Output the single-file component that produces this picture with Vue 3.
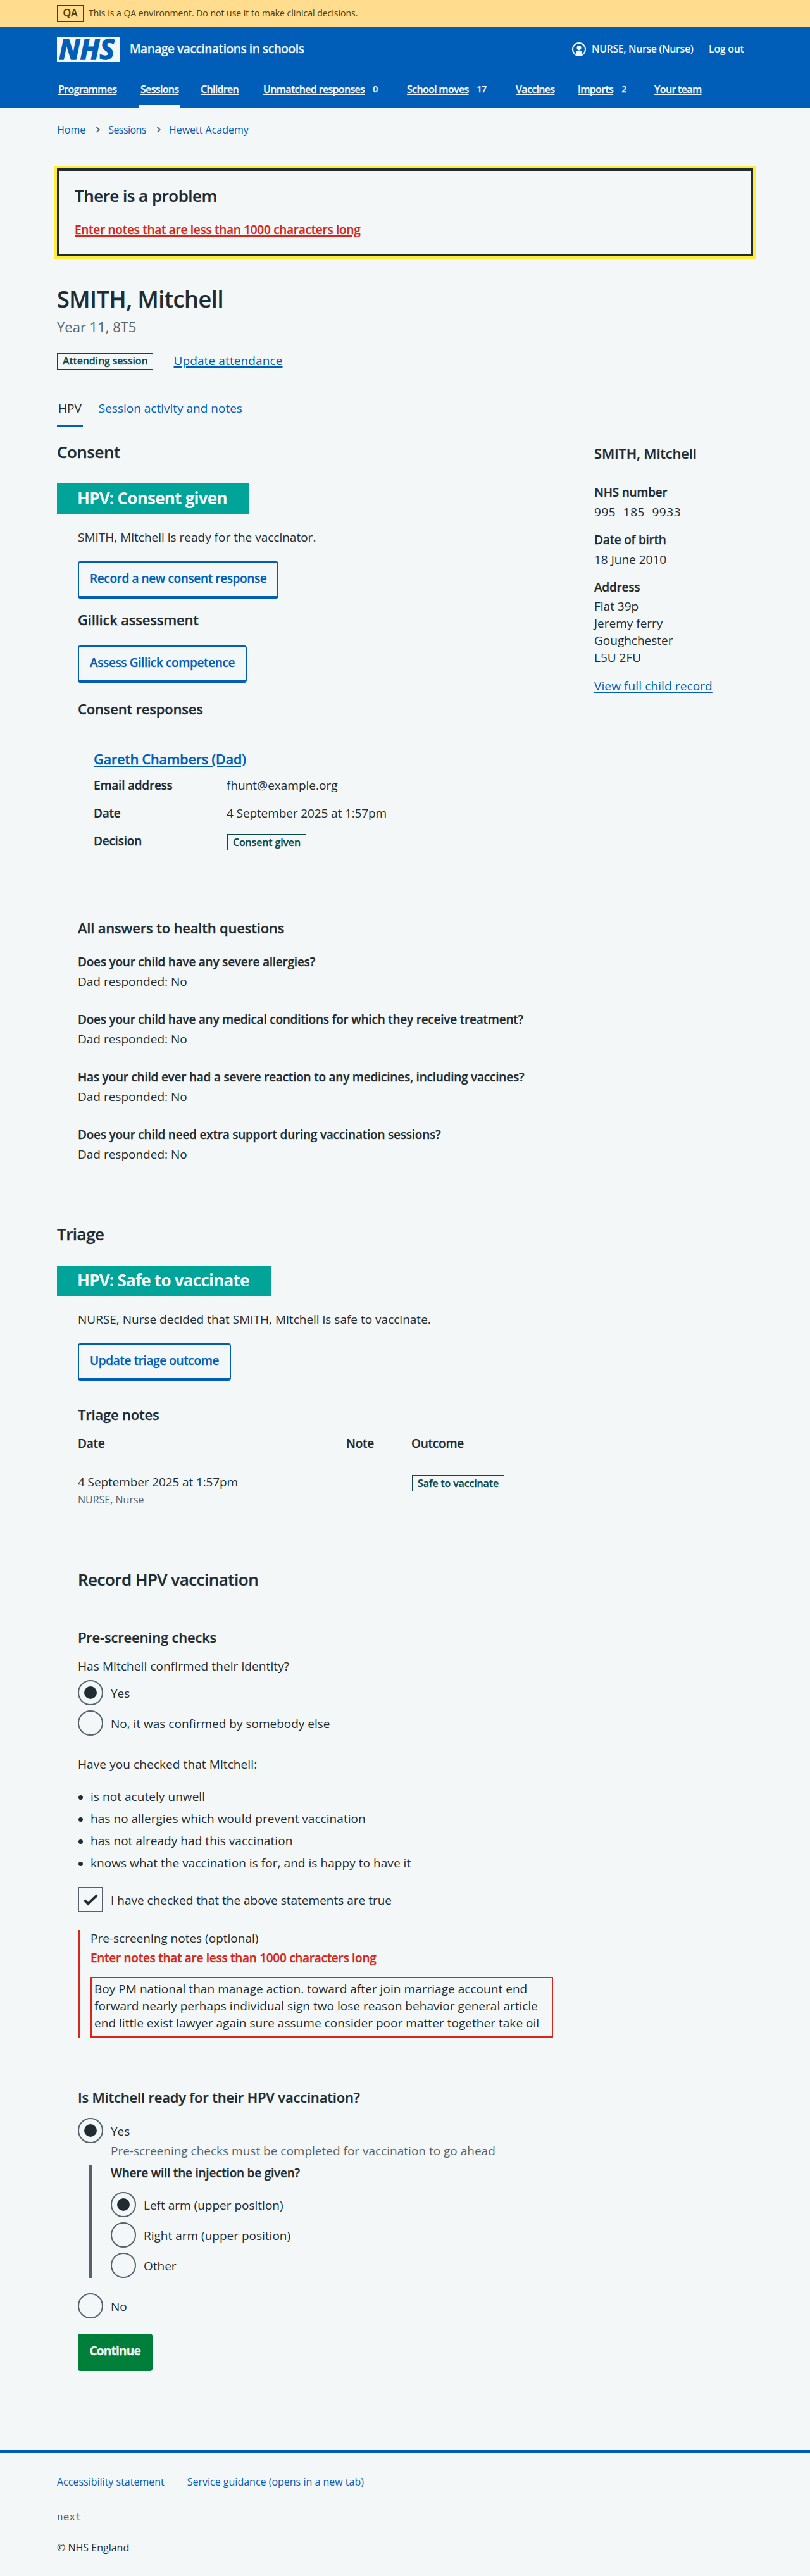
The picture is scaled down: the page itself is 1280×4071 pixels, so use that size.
<script setup>
const nav = [
  { label: 'Programmes' },
  { label: 'Sessions', active: true },
  { label: 'Children' },
  { label: 'Unmatched responses', count: 0 },
  { label: 'School moves', count: 17 },
  { label: 'Vaccines' },
  { label: 'Imports', count: 2 },
  { label: 'Your team' },
]

const questions = [
  'Does your child have any severe allergies?',
  'Does your child have any medical conditions for which they receive treatment?',
  'Has your child ever had a severe reaction to any medicines, including vaccines?',
  'Does your child need extra support during vaccination sessions?',
]

const checks = [
  'is not acutely unwell',
  'has no allergies which would prevent vaccination',
  'has not already had this vaccination',
  'knows what the vaccination is for, and is happy to have it',
]

const sites = ['Left arm (upper position)', 'Right arm (upper position)', 'Other']

const notes = [
  'Boy PM national than manage action. toward after join marriage account end',
  'forward nearly perhaps individual sign two lose reason behavior general article',
  'end little exist lawyer again sure assume consider poor matter together take oil',
  'money house way summer man blue even will behave we scene home room hot him all',
].join('\n')
</script>

<template>
  <div class="page">
    <div class="env">
      <div class="wrap env-row">
        <strong class="env-tag">QA</strong>
        <span class="env-text">This is a QA environment. Do not use it to make clinical decisions.</span>
      </div>
    </div>

    <header class="header">
      <div class="wrap">
        <div class="header-top">
          <span class="logo"><span class="logo-text">NHS</span></span>
          <span class="service">Manage vaccinations in schools</span>
          <svg class="user-icon" width="22" height="22" viewBox="0 0 22 22">
            <circle cx="11" cy="11" r="10" fill="none" stroke="#f3f7f8" stroke-width="2" />
            <circle cx="11" cy="8.4" r="3.5" fill="#f3f7f8" />
            <path d="M6.2 19.6V17a4.8 4.6 0 0 1 9.6 0v2.6A10 10 0 0 1 11 21a10 10 0 0 1-4.8-1.4z" fill="#f3f7f8" />
          </svg>
          <span class="user">NURSE, Nurse (Nurse)</span>
          <a class="logout">Log out</a>
        </div>
        <nav class="nav">
          <div v-for="item in nav" :key="item.label" class="nav-cell">
            <span class="nav-item" :class="{ active: item.active }">
              <a>{{ item.label }}</a><span v-if="item.count !== undefined" class="count">{{ item.count }}</span>
            </span>
          </div>
        </nav>
      </div>
    </header>

    <div class="wrap">
      <div class="crumbs">
        <a>Home</a>
        <svg class="chev" width="8" height="10" viewBox="0 0 8 10"><path d="M1.5 .8 5.8 5 1.5 9.2" fill="none" stroke="#56636c" stroke-width="1.8" /></svg>
        <a class="crumb-mid">Sessions</a>
        <svg class="chev" width="8" height="10" viewBox="0 0 8 10"><path d="M1.5 .8 5.8 5 1.5 9.2" fill="none" stroke="#56636c" stroke-width="1.8" /></svg>
        <a>Hewett Academy</a>
      </div>

      <div class="errors">
        <h2 class="h26">There is a problem</h2>
        <a class="b19 error-link">Enter notes that are less than 1000 characters long</a>
      </div>

      <h1 class="h1">SMITH, Mitchell</h1>
      <div class="caption">Year 11, 8T5</div>
      <div class="attendance">
        <span class="tag">Attending session</span>
        <a class="link">Update attendance</a>
      </div>
      <div class="tabs">
        <span class="tab current">HPV</span>
        <span class="tab">Session activity and notes</span>
      </div>

      <div class="columns">
        <main class="main">
          <h2 class="h26 consent">Consent</h2>
          <div class="banner">HPV: Consent given</div>
          <section class="inner">
            <p class="lead">SMITH, Mitchell is ready for the vaccinator.</p>
            <button class="btn">Record a new consent response</button>
            <h3 class="h22 gillick">Gillick assessment</h3>
            <button class="btn">Assess Gillick competence</button>
            <h3 class="h22 responses">Consent responses</h3>
            <div class="respondent">
              <h4 class="h22"><a class="link name">Gareth Chambers (Dad)</a></h4>
              <div class="row"><b class="b19">Email address</b><span>fhunt@example.org</span></div>
              <div class="row"><b class="b19">Date</b><span class="date">4 September 2025 at 1:57pm</span></div>
              <div class="row"><b class="b19">Decision</b><span class="tag">Consent given</span></div>
            </div>
            <h3 class="h22 answers">All answers to health questions</h3>
            <div v-for="q in questions" :key="q" class="question">
              <b class="b19">{{ q }}</b>
              <p>Dad responded: No</p>
            </div>
          </section>

          <h2 class="h26 triage">Triage</h2>
          <div class="banner">HPV: Safe to vaccinate</div>
          <section class="inner">
            <p class="lead">NURSE, Nurse decided that SMITH, Mitchell is safe to vaccinate.</p>
            <button class="btn">Update triage outcome</button>
            <h3 class="h22 triage-notes">Triage notes</h3>
            <div class="table head b19"><span>Date</span><span>Note</span><span>Outcome</span></div>
            <div class="table body">
              <div>
                <p class="date">4 September 2025 at 1:57pm</p>
                <p class="by">NURSE, Nurse</p>
              </div>
              <span></span>
              <span class="tag">Safe to vaccinate</span>
            </div>

            <h2 class="h26 record">Record HPV vaccination</h2>
            <h3 class="h22 prescreen">Pre-screening checks</h3>
            <p class="legend">Has Mitchell confirmed their identity?</p>
            <div class="options">
              <div class="option"><i class="radio on"></i><span>Yes</span></div>
              <div class="option"><i class="radio"></i><span>No, it was confirmed by somebody else</span></div>
            </div>
            <p class="have">Have you checked that Mitchell:</p>
            <ul class="checks">
              <li v-for="c in checks" :key="c">{{ c }}</li>
            </ul>
            <div class="option statement">
              <i class="checkbox">
                <svg width="36" height="36" viewBox="0 0 36 36"><path d="M9 18.6 14.6 24.4 29 10.6" transform="translate(-.5 .3)" fill="none" stroke="#212b32" stroke-width="4" /></svg>
              </i>
              <span>I have checked that the above statements are true</span>
            </div>

            <div class="field">
              <p class="field-label">Pre-screening notes (optional)</p>
              <p class="b19 field-error">Enter notes that are less than 1000 characters long</p>
              <div class="textarea">{{ notes }}</div>
            </div>

            <h3 class="h22 ready">Is Mitchell ready for their HPV vaccination?</h3>
            <div class="option"><i class="radio on"></i><span>Yes</span></div>
            <p class="hint">Pre-screening checks must be completed for vaccination to go ahead</p>
            <div class="conditional">
              <p class="b19 where">Where will the injection be given?</p>
              <div class="options">
                <div v-for="(s, i) in sites" :key="s" class="option"><i class="radio" :class="{ on: i === 0 }"></i><span>{{ s }}</span></div>
              </div>
            </div>
            <div class="option last"><i class="radio"></i><span>No</span></div>
            <button class="btn primary">Continue</button>
          </section>
        </main>

        <aside class="aside">
          <h2 class="h22">SMITH, Mitchell</h2>
          <b class="b19 first">NHS number</b>
          <p class="number">995 185 9933</p>
          <b class="b19">Date of birth</b>
          <p>18 June 2010</p>
          <b class="b19">Address</b>
          <p class="address">Flat 39p<br>Jeremy ferry<br>Goughchester<br>L5U 2FU</p>
          <a class="link">View full child record</a>
        </aside>
      </div>
    </div>

    <footer class="footer">
      <div class="wrap">
        <div class="footer-links">
          <a>Accessibility statement</a>
          <a>Service guidance (opens in a new tab)</a>
        </div>
        <p class="version">next</p>
        <p class="copy">© NHS England</p>
      </div>
    </footer>
  </div>
</template>

<style>
body { margin: 0; background: #f3f7f8; }
</style>

<style scoped>
.page {
  min-height: 4071px;
  background: #f3f7f8;
  color: #212b32;
  font: 400 19px/28px "Open Sans", "Noto Sans", sans-serif;
}
.page * { box-sizing: border-box; white-space: nowrap; }
h1, h2, h3, h4, p, ul { margin: 0; padding: 0; font-weight: inherit; }
a { text-decoration: underline; text-decoration-thickness: 1px; text-underline-offset: 2px; }
.wrap { width: 1100px; margin: 0 auto; }
.b19, .h22, .h26, .h1, .btn, .tag, .nav, .service, .env-tag { -webkit-text-stroke: 0.25px currentColor; }
.b19 { display: block; font-weight: 600; letter-spacing: -0.012em; }
.h22 { font-size: 22px; line-height: 32px; font-weight: 600; letter-spacing: -0.009em; }
.h26 { font-size: 26px; line-height: 32px; font-weight: 600; letter-spacing: -0.02em; }
.link { color: #005eb8; text-decoration-thickness: 1.5px; letter-spacing: 0.006em; }
.link.name { letter-spacing: -0.02em; }

.env { background: #ffdc8e; color: #4d3b09; height: 42px; }
.env-row { display: flex; align-items: center; height: 42px; }
.env-tag { height: 26px; width: 42px; border: 1px solid #4d3b09; text-align: center; font-size: 16px; line-height: 22px; font-weight: 600; }
.env-text { margin-left: 8px; font-size: 14px; line-height: 20px; }

.header { height: 128px; background: #005eb8; color: #f3f7f8; }
.header-top { display: flex; align-items: center; height: 72px; padding-bottom: 1px; border-bottom: 1px solid rgba(255, 255, 255, 0.2); }
.logo { width: 100px; height: 40px; background: #f3f7f8; color: #005eb8; margin-top: 2px; }
.logo-text { display: block; padding-left: 3px; font-size: 44px; line-height: 38px; font-weight: 700; font-style: italic; letter-spacing: 0.3px; -webkit-text-stroke: 1.5px #005eb8; }
.service { margin-left: 15px; font-weight: 600; letter-spacing: -0.022em; }
.user-icon { margin-left: auto; margin-top: 1px; }
.user { margin-left: 9px; width: 160px; font-size: 16px; line-height: 24px; font-weight: 600; letter-spacing: -0.025em; }
.logout { margin-left: 25px; width: 70px; font-size: 16px; line-height: 24px; font-weight: 600; letter-spacing: -0.02em; }
.nav { display: grid; grid-template-columns: 130px 95px 99px 227px 172px 98px 121px auto; height: 56px; font-size: 16px; line-height: 24px; font-weight: 600; letter-spacing: -0.042em; }
.nav-cell { display: flex; }
.nav-item { display: flex; height: 56px; padding: 15px 2px 0; border-bottom: 4px solid transparent; }
.nav-item.active { border-bottom-color: #f3f7f8; }
.count { margin-left: 13px; font-size: 14px; }

.crumbs { display: flex; align-items: center; margin-top: 23px; font-size: 16px; line-height: 24px; color: #005eb8; }
.crumb-mid { letter-spacing: -0.035em; }
.chev { margin: 0 12px 0 16px; }

.errors { height: 139px; margin-top: 49px; padding: 23px 24px 0; border: 4px solid #212b32; outline: 4px solid #ffeb3b; }
.error-link { margin-top: 24px; color: #d5281b; letter-spacing: -0.015em; text-decoration-thickness: 1.5px; }

.h1 { margin-top: 45px; font-size: 36px; line-height: 45px; font-weight: 600; letter-spacing: -0.012em; }
.caption { margin-top: 5px; font-size: 22px; line-height: 32px; color: #56636c; }
.attendance { display: flex; height: 26px; margin-top: 26px; }
.attendance .link { margin: -2px 0 0 32px; }
.tag { display: inline-block; height: 26px; padding: 0 8px; border: 1px solid #0c4a4a; color: #0c4a4a; font-size: 16px; line-height: 24px; font-weight: 600; letter-spacing: -0.01em; }
.attendance .tag { line-height: 22px; }
.tabs { display: flex; gap: 23px; margin-top: 47px; }
.tab { height: 44px; padding: 0 2px; color: #005eb8; }
.tab.current { color: #212b32; border-bottom: 4px solid #005eb8; }

.columns { display: flex; justify-content: space-between; }
.main { width: 800px; }
.consent { margin-top: 23px; }
.banner { display: inline-block; height: 48px; margin-top: 34px; padding: 7px 34px 0 32px; background: #00a499; color: #f3f7f8; font-size: 26px; line-height: 32px; font-weight: 700; letter-spacing: -0.029em; vertical-align: top; }
.inner { padding-left: 33px; }
.lead { padding: 23px 0 24px; }
.btn { display: block; height: 59px; margin: 0; padding: 11px 17px 14px; border: 2px solid #005eb8; border-bottom-width: 4px; border-radius: 4px; background: #f3f7f8; color: #005eb8; font: inherit; font-weight: 600; letter-spacing: -0.02em; }
.btn.primary { margin-top: 24px; padding: 11px 16.5px 14px; background: #007f3b; border-color: #007f3b; color: #f3f7f8; font-weight: 700; letter-spacing: -0.04em; }
.gillick { margin-top: 17px; margin-bottom: 25px; }
.responses { margin-top: 25px; }
.respondent { margin-top: 47px; padding-left: 25px; }
.respondent .row:nth-child(2) { margin-top: 12px; }
.row { display: flex; height: 28px; margin-top: 16px; }
.row .b19 { width: 210px; }
.row .tag { margin: 3px 0 0 1px; }
.date { letter-spacing: -0.006em; }
.answers { margin-top: 107px; margin-bottom: 24px; }
.question { height: 59px; margin-bottom: 32px; }
.question .b19 { margin-bottom: 3px; }
.triage { margin-top: 96px; }
.question:last-child { margin-bottom: 0; }
.triage-notes { margin-top: 37px; }
.table { display: grid; grid-template-columns: 424px 103px auto; justify-items: start; }
.table.head { margin-top: 16px; }
.table.body { margin-top: 33px; }
.table .tag { margin: 3px 0 0 1px; }
.by { margin-top: 2px; font-size: 16px; line-height: 24px; color: #56636c; }
.record { margin-top: 98px; }
.prescreen { margin-top: 59px; }
.legend { margin-top: 16px; margin-bottom: 8px; letter-spacing: 0.005em; }
.options { display: flex; flex-direction: column; gap: 8px; }
.option { display: flex; height: 40px; }
.option span { margin: 7px 0 0 12px; }
.radio { flex: none; width: 40px; height: 40px; border: 2px solid #56636c; border-radius: 50%; display: grid; place-items: center; }
.radio.on::after { content: ""; width: 20px; height: 20px; border-radius: 50%; background: #212b32; }
.checkbox { flex: none; display: block; width: 40px; height: 40px; border: 2px solid #56636c; }
.checkbox svg { display: block; }
.have { margin-top: 31px; letter-spacing: 0.005em; }
.checks { list-style: none; margin-top: 23px; display: flex; flex-direction: column; gap: 7px; letter-spacing: 0.003em; }
.checks li { display: flex; align-items: center; }
.checks li::before { content: ""; width: 7px; height: 7px; margin: 2px 12px 0 1px; border-radius: 50%; background: #212b32; }
.statement { margin-top: 24px; }
.field { height: 170px; margin-top: 28px; padding-left: 16px; border-left: 4px solid #d5281b; }
.field-label { position: relative; top: -1px; }
.field-error { margin-top: 2px; color: #d5281b; letter-spacing: -0.015em; }
.textarea { width: 731px; height: 96px; margin-top: 16px; padding: 4px 3px 0 4px; border: 2px solid #d5281b; overflow: hidden; line-height: 27.14px; letter-spacing: 0.002em; }
.page .textarea { white-space: pre; }
.ready { margin-top: 78px; margin-bottom: 17px; }
.hint { margin: -2px 0 0 52px; color: #56636c; }
.conditional { height: 179px; margin: 8px 0 0 18px; padding-left: 30px; border-left: 4px solid #56636c; }
.where { position: relative; top: -1px; margin-bottom: 15px; }
.last { margin-top: 24px; }

.aside { width: 251px; }
.aside .h22 { margin-top: 25px; }
.aside .b19 { margin: 16px 0 3px; }
.aside .first { margin-top: 32px; }
.number { letter-spacing: 0.57px; word-spacing: 5.9px; }
.address { line-height: 27.14px; margin-bottom: 16px; }

.footer { margin-top: 125px; padding-top: 34px; border-top: 4px solid #005eb8; font-size: 16px; line-height: 24px; }
.footer-links { display: flex; gap: 36px; color: #005eb8; }
.version { margin-top: 32px; color: #56636c; font-family: "DejaVu Sans Mono", monospace; }
.copy { margin-top: 24px; }
</style>
